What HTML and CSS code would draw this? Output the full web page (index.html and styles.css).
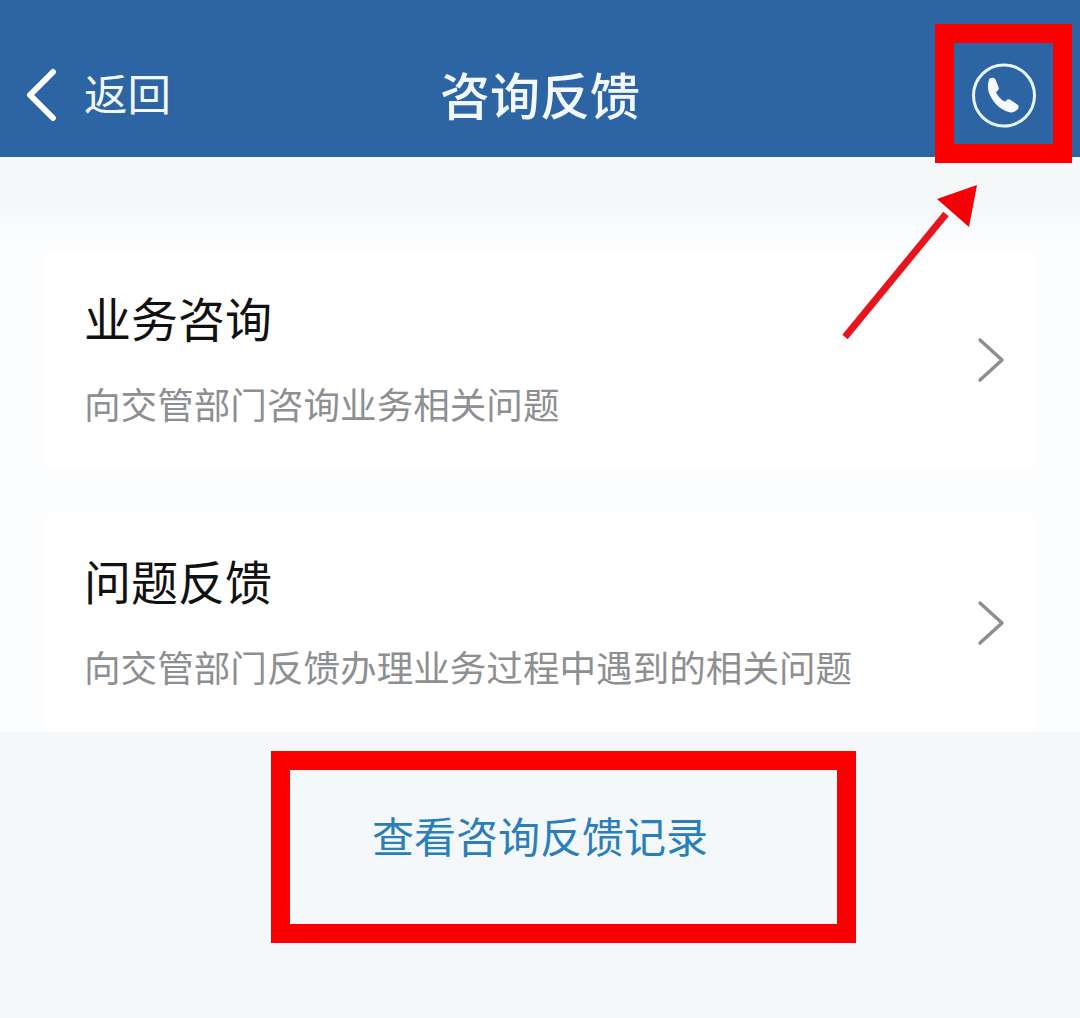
FILE: index.html
```html
<!DOCTYPE html>
<html lang="zh-CN">
<head>
    <meta charset="UTF-8">
    <meta name="viewport" content="width=device-width, initial-scale=1.0">
    <title>咨询反馈</title>
    <link rel="stylesheet" href="styles.css">
</head>
<body>
    <div class="page">
        <header class="topbar">
            <a class="back">
                <svg class="back-icon" width="34" height="54" viewBox="0 0 34 54">
                    <path d="M29 4 L6 27 L29 50" fill="none" stroke="#fff" stroke-width="6" stroke-linecap="round" stroke-linejoin="round"/>
                </svg>
                <span class="back-label">返回</span>
            </a>
            <h1 class="topbar-title">咨询反馈</h1>
            <a class="phone">
                <svg width="66" height="66" viewBox="0 0 66 66">
                    <circle cx="33" cy="33.5" r="30.5" fill="none" stroke="#e8f5fb" stroke-width="3"/>
                    <path d="M18.5 16.5 c2.5-1.5 5-1 6 1 l3 7.5 c.7 2-.2 3.2-1.5 4.2 l-1 1 c1.5 3.5 5 7.5 9 9.5 l1.2-1.2 c1.3-1.2 3-1.6 4.5-.6 l6.5 4.5 c1.8 1.3 2 3.3 .6 4.6 c-2.5 3-6 4-9.3 3 c-9-2.5-17-11-20-20.5 c-1.2-5 -.5-11 1.5-13.4 z" fill="#f4fafd"/>
                </svg>
            </a>
        </header>

        <main class="content">
            <div class="card-group">
                <div class="card">
                    <div class="card-text">
                        <div class="card-title">业务咨询</div>
                        <div class="card-desc">向交管部门咨询业务相关问题</div>
                    </div>
                    <svg class="chevron" width="28" height="46" viewBox="0 0 28 46">
                        <path d="M3 3 L25 23 L3 43" fill="none" stroke="#8e8e8e" stroke-width="3.5" stroke-linecap="round" stroke-linejoin="round"/>
                    </svg>
                </div>
                <div class="card">
                    <div class="card-text">
                        <div class="card-title">问题反馈</div>
                        <div class="card-desc">向交管部门反馈办理业务过程中遇到的相关问题</div>
                    </div>
                    <svg class="chevron" width="28" height="46" viewBox="0 0 28 46">
                        <path d="M3 3 L25 23 L3 43" fill="none" stroke="#8e8e8e" stroke-width="3.5" stroke-linecap="round" stroke-linejoin="round"/>
                    </svg>
                </div>
            </div>
            <a class="records">查看咨询反馈记录</a>
        </main>

        <!-- red annotations drawn over the screenshot -->
        <div class="mark-box mark-phone"></div>
        <div class="mark-box mark-records"></div>
        <svg class="arrow" width="150" height="170" viewBox="0 0 150 170">
            <path d="M5 157 L106 34" fill="none" stroke="#e8141c" stroke-width="7"/>
            <path d="M137 5 L97 19 L129 47 Z" fill="#f40006"/>
        </svg>
    </div>
</body>
</html>
```

FILE: styles.css
```css
body {
    margin: 0;
    font-family: "Noto Sans CJK SC", "Noto Sans", sans-serif;
    background-color: #f4f8fa;
}
.page {
    position: relative;
    height: 1018px;
    overflow: hidden;
}
.topbar {
    position: relative;
    display: flex;
    align-items: center;
    justify-content: space-between;
    height: 157px;
    padding: 32px 43px 0 24px;
    box-sizing: border-box;
    background-color: #2c64a4;
    color: #f2f8fc;
}
.back {
    display: flex;
    align-items: center;
    gap: 26px;
    font-size: 43.5px;
    line-height: 1;
}
.back-label {
    padding-bottom: 4px;
}
.topbar-title {
    position: absolute;
    left: 0;
    right: 0;
    margin: 0;
    padding-bottom: 4px;
    font-size: 50px;
    font-weight: 500;
    text-align: center;
}
.phone {
    display: flex;
}
.content {
    display: flex;
    flex-direction: column;
}
.card-group {
    display: flex;
    flex-direction: column;
    gap: 44px;
    padding: 93px 44px 0;
    background: linear-gradient(#f5f8f9 50px, #fcfdfe 85px);
}
.card {
    display: flex;
    align-items: center;
    justify-content: space-between;
    height: 219px;
    padding: 0 31px 0 40px;
    background-color: #fff;
    border-radius: 8px;
}
.card-text {
    padding-bottom: 3px;
}
.card-title {
    font-size: 47px;
    line-height: 60px;
    color: #111;
}
.card-desc {
    margin-top: 32px;
    font-size: 36.6px;
    line-height: 50px;
    color: #8d8f91;
}
.records {
    display: flex;
    align-items: center;
    justify-content: center;
    height: 192px;
    margin-top: 19px;
    padding-bottom: 26px;
    box-sizing: border-box;
    font-size: 42px;
    color: #2a7fba;
}
.mark-box {
    position: absolute;
    box-sizing: border-box;
    border: 19px solid #fa0000;
}
.mark-phone {
    top: 24px;
    left: 935px;
    width: 137px;
    height: 139px;
}
.mark-records {
    top: 751px;
    left: 271px;
    width: 585px;
    height: 192px;
}
.arrow {
    position: absolute;
    left: 840px;
    top: 180px;
}
```
